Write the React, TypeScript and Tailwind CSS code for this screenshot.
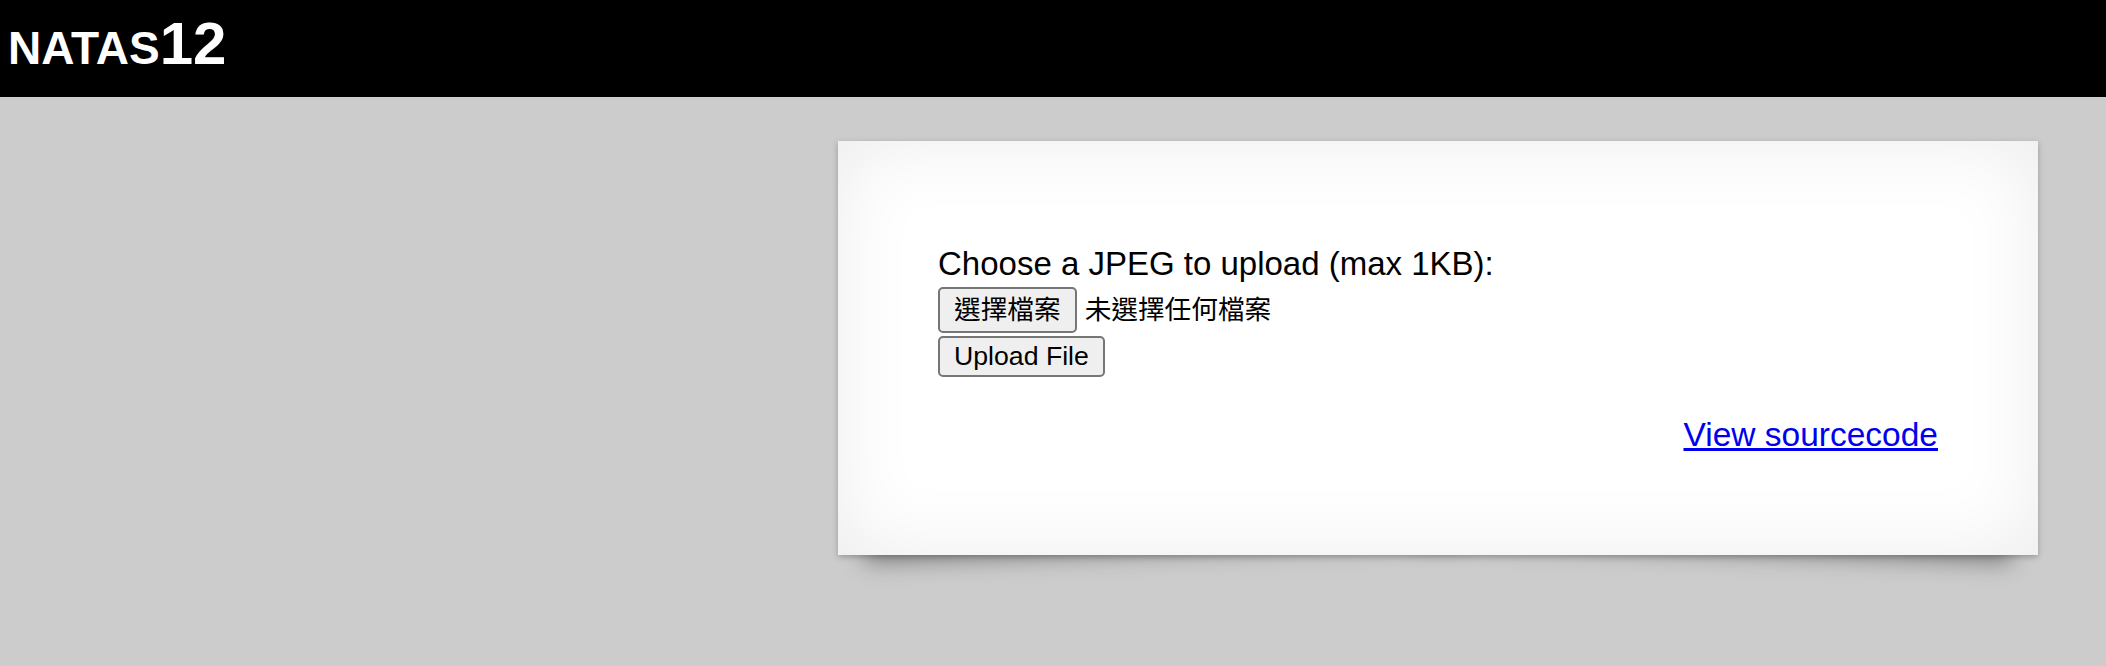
const font = { fontFamily: '"Liberation Sans", "Noto Sans CJK TC", Arial, sans-serif' };

function FileInput() {
  return (
    <div className="mt-[5px] flex items-center text-[26.67px] text-black">
      <button className="flex h-[46px] items-center rounded-[5px] border-2 border-[#767676] bg-[#efefef] px-[14px] leading-none">
        選擇檔案
      </button>
      <span className="ml-[8px]">未選擇任何檔案</span>
    </div>
  );
}

export default function App() {
  return (
    <div className="isolate min-h-[666px] bg-[#cccccc]" style={font}>
      <h1 className="h-[97px] bg-black pl-[8px] pt-[14px] text-[60px] font-bold leading-none text-white">
        <span className="text-[46px]">NATAS</span>
        <span>12</span>
      </h1>

      <div className="relative ml-[838px] mt-[44px] w-[1200px] bg-white px-[100px] pb-[102px] pt-[104px] shadow-[0_2px_6px_rgba(0,0,0,0.25),inset_0_0_80px_rgba(0,0,0,0.08)]">
        {/* lifted corner shadows */}
        <div className="absolute bottom-[24px] left-[24px] -z-10 h-[20%] w-1/2 max-w-[600px] -rotate-2 shadow-[0_22px_22px_rgba(0,0,0,0.35)]" />
        <div className="absolute bottom-[24px] right-[24px] -z-10 h-[20%] w-1/2 max-w-[600px] rotate-2 shadow-[0_22px_22px_rgba(0,0,0,0.35)]" />

        <form className="flex flex-col items-start text-[33px] text-black">
          <div className="leading-[37px]">Choose a JPEG to upload (max 1KB):</div>
          <FileInput />
          <button className="mt-[3px] flex h-[41px] items-center rounded-[5px] border-2 border-[#767676] bg-[#efefef] px-[14px] text-[26.67px] leading-none">
            Upload File
          </button>
        </form>

        <div className="mt-[39px] text-right text-[33.5px] leading-[37px]">
          <a href="#" className="text-[#0000ee] underline">
            View sourcecode
          </a>
        </div>
      </div>
    </div>
  );
}
